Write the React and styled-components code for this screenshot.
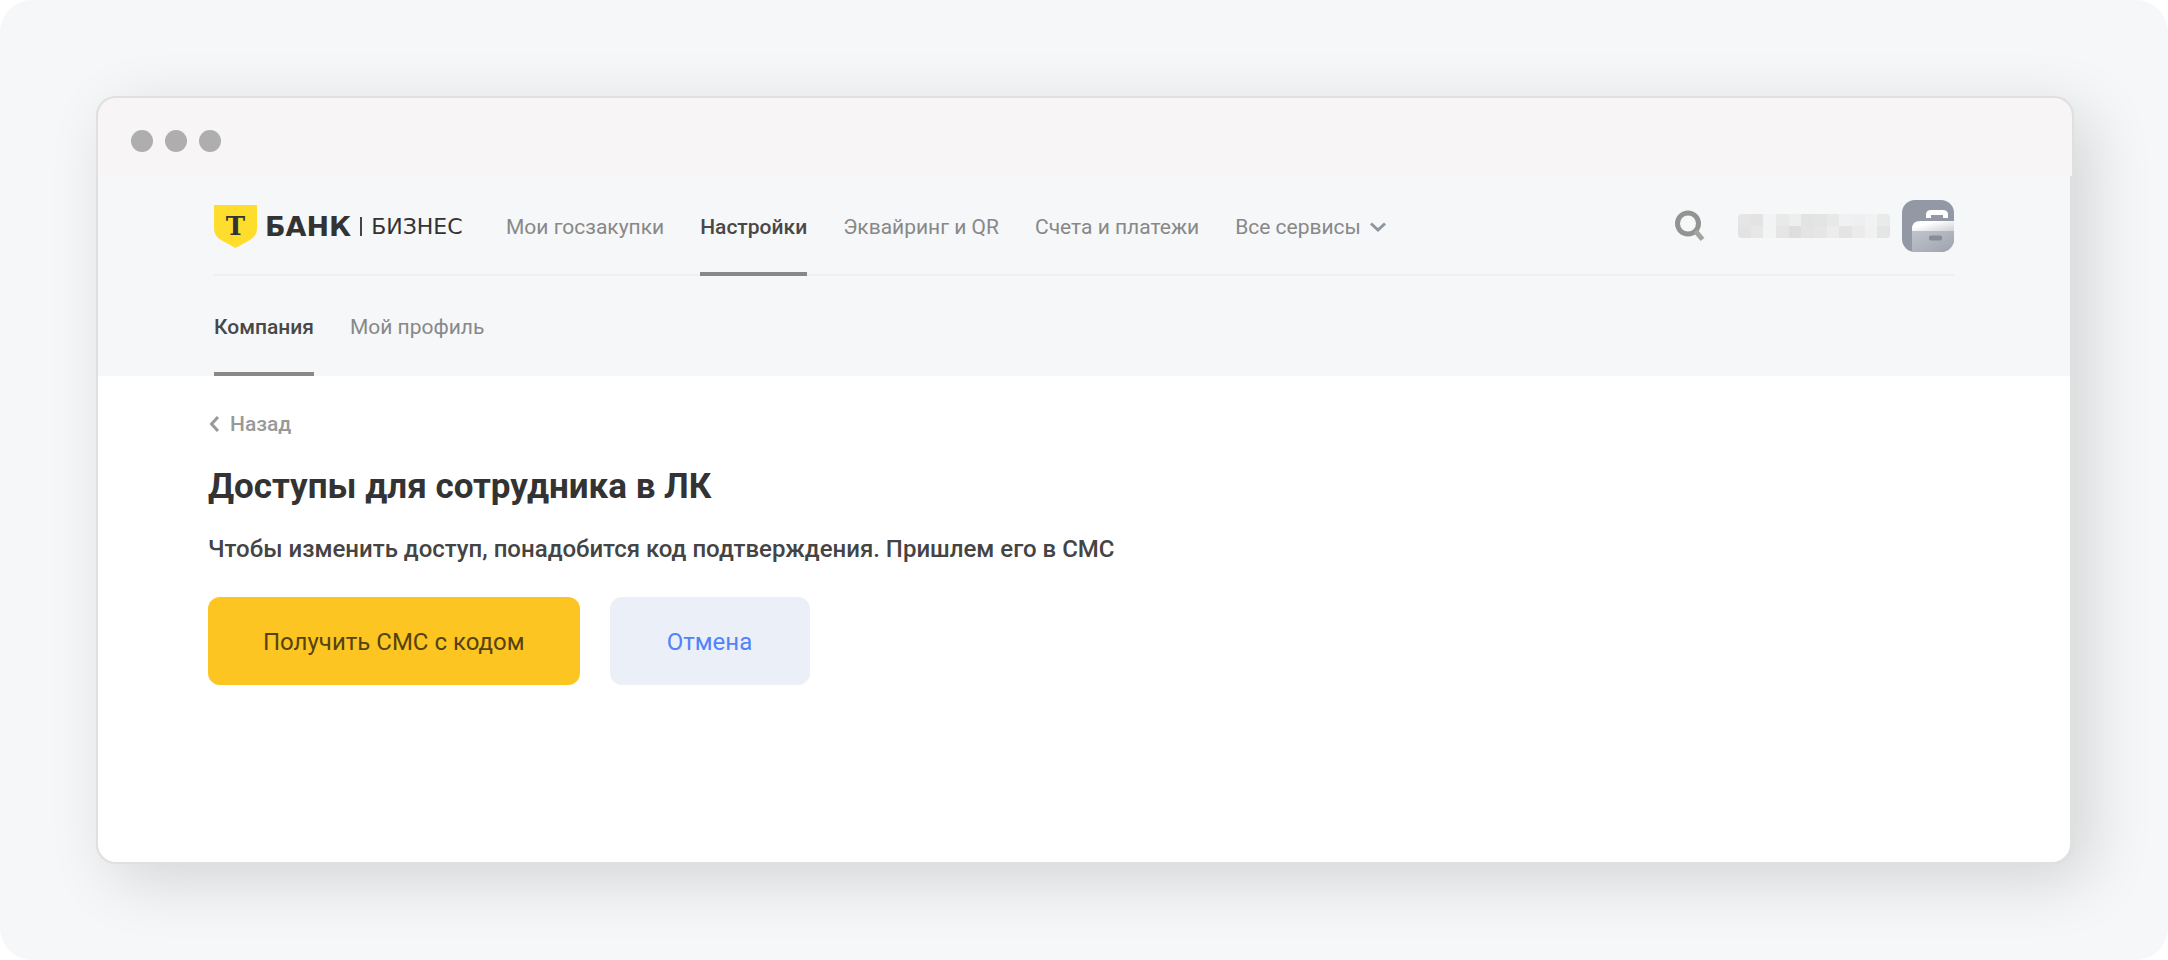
import React from "react";
import styled, { createGlobalStyle } from "styled-components";

const GlobalStyle = createGlobalStyle`
  * { box-sizing: border-box; }
  body {
    margin: 0;
    background: #fff;
    font-family: Roboto, "Liberation Sans", sans-serif;
    color: #333;
  }
`;

const Stage = styled.div`
  display: flex;
  min-height: 100vh;
  padding: 96px 94px 96px 96px;
  border-radius: 32px;
  background: #f5f7f9;
`;

const Window = styled.div`
  flex: 1;
  display: flex;
  flex-direction: column;
  border-radius: 20px;
  background: #dfe0e0;
  box-shadow: 16px 16px 64px rgba(0, 0, 0, 0.14);
`;

const TitleBar = styled.div`
  display: flex;
  align-items: center;
  gap: 12px;
  height: 80px;
  padding: 8px 33px 0;
  border: 2px solid #e0e0e0;
  border-bottom: 0;
  border-radius: 20px 20px 0 0;
  background: #f7f5f6;
`;

const Dot = styled.span`
  width: 22px;
  height: 22px;
  border-radius: 50%;
  background: #aeaeae;
`;

const Body = styled.div`
  flex: 1;
  margin-right: 2px;
  border: 2px solid #e0e0e0;
  border-top: 0;
  border-radius: 0 0 20px 20px;
  background: #fff;
`;

const Header = styled.header`
  padding: 0 116px;
  background: #f5f7f9;
`;

const MainRow = styled.div`
  display: flex;
  align-items: stretch;
  height: 100px;
  background: linear-gradient(#eeeff1, #eeeff1) 0 98px / 100% 2px no-repeat;
`;

const Logo = styled.a`
  display: flex;
  align-items: center;
  width: 254px;
  margin-right: 38px;
  color: #333;
  font-family: "DejaVu Sans", sans-serif;
  text-decoration: none;
`;

const BankName = styled.span`
  margin-left: 8px;
  font-size: 27px;
  font-weight: 700;
`;

const Divider = styled.span`
  width: 2px;
  height: 19px;
  margin: 0 9px;
  background: #444;
`;

const Product = styled.span`
  font-size: 22px;
  font-weight: 400;
`;

const Tabs = styled.nav`
  display: flex;
  gap: 36px;
  height: 100px;
`;

const Tab = styled.a`
  display: flex;
  align-items: center;
  padding-top: 5px;
  border-bottom: 4px solid ${(p) => (p.$active ? "#888" : "transparent")};
  color: ${(p) => (p.$active ? "#484848" : "#888")};
  font-size: 21px;
  font-weight: ${(p) => (p.$active ? 500 : 400)};
  text-decoration: none;
  white-space: nowrap;
`;

const MenuButton = styled.button`
  display: flex;
  align-items: center;
  gap: 8px;
  padding: 1px 0 0;
  border: 0;
  background: none;
  color: #888;
  font: 21px Roboto, sans-serif;
  white-space: nowrap;
`;

const Account = styled.div`
  display: flex;
  align-items: center;
  margin-left: auto;
`;

const SearchButton = styled.button`
  display: flex;
  margin-right: 33px;
  padding: 0;
  border: 0;
  background: none;
`;

const Mosaic = styled.div`
  display: grid;
  grid-template-columns: repeat(12, 1fr);
  width: 152px;
  height: 24px;
  margin-right: 12px;
  border-radius: 4px;
  overflow: hidden;
`;

const Cell = styled.span`
  background: ${(p) => p.$shade};
`;

const Main = styled.main`
  padding: 36px 110px;
`;

const BackLink = styled.a`
  display: inline-flex;
  align-items: center;
  gap: 10px;
  color: #999;
  font-size: 21px;
  font-weight: 500;
  line-height: 24px;
  text-decoration: none;
`;

const Title = styled.h1`
  margin: 28px 0 0;
  font-size: 35px;
  font-weight: 700;
  line-height: 44px;
`;

const Lead = styled.p`
  margin: 24px 0 0;
  color: #444;
  font-size: 24px;
  font-weight: 500;
  line-height: 32px;
`;

const Actions = styled.div`
  display: flex;
  gap: 30px;
  margin-top: 32px;
`;

const ActionButton = styled.button`
  min-width: 200px;
  height: 88px;
  padding: 2px 55px 0;
  border: 0;
  border-radius: 12px;
  background: ${(p) => (p.$primary ? "#fcc521" : "#ebeff7")};
  color: ${(p) => (p.$primary ? "#54430f" : "#4f83fa")};
  font: 24px Roboto, sans-serif;
`;

const shades = [
  "#e5e5e6", "#e3e3e4", "#f2f3f4", "#e8e9e9", "#eeeeef", "#e2e3e3", "#e3e4e4", "#e8e8e9", "#f0f1f1", "#eeeff0", "#f1f2f2", "#e9eaea",
  "#e3e3e4", "#e7e7e8", "#f2f3f3", "#e5e5e5", "#dededf", "#e4e4e5", "#e6e6e7", "#ececed", "#e4e4e5", "#ebebec", "#f1f1f2", "#e4e5e5",
];

const Shield = () => (
  <svg width="43" height="43" viewBox="0 0 43 43" aria-hidden="true">
    <path d="M0 0H43V23Q43 31 36 35L21.5 43L7 35Q0 31 0 23Z" fill="#ffdd2d" />
    <text x="21.5" y="30" textAnchor="middle" fontFamily="DejaVu Serif" fontWeight="700" fontSize="26" fill="#333">Т</text>
  </svg>
);

const Chevron = () => (
  <svg width="18" height="12" viewBox="0 0 18 12" aria-hidden="true">
    <path d="M2 2.500L9 9L16 2.500" fill="none" stroke="#8e979f" strokeWidth="3" />
  </svg>
);

const BackArrow = () => (
  <svg width="12" height="18" viewBox="0 0 12 18" aria-hidden="true">
    <path d="M10 2L3.500 9L10 16" fill="none" stroke="#999" strokeWidth="3" />
  </svg>
);

const SearchIcon = () => (
  <svg width="30" height="32" viewBox="0 0 30 32" aria-hidden="true">
    <circle cx="13" cy="13.500" r="10.500" fill="none" stroke="#929491" strokeWidth="5" />
    <path d="M20.500 21L27.500 29.500" stroke="#a3a4a2" strokeWidth="5" />
  </svg>
);

const Briefcase = () => (
  <svg width="52" height="52" viewBox="0 0 52 52" role="img" aria-label="Компания">
    <defs>
      <linearGradient id="flap" x1="0" y1="0" x2="1" y2="1">
        <stop offset="0.300" stopColor="#fff" />
        <stop offset="1" stopColor="#c9ccd2" />
      </linearGradient>
      <linearGradient id="case" x1="0" y1="0" x2="1" y2="1">
        <stop offset="0" stopColor="#c0c4cc" />
        <stop offset="1" stopColor="#9da3ae" />
      </linearGradient>
      <clipPath id="tile"><rect width="52" height="52" rx="13" /></clipPath>
    </defs>
    <g clipPath="url(#tile)">
      <rect width="52" height="52" fill="#9299a4" />
      <path d="M26.500 18V14.500Q26.500 12.500 29 12.500H41Q43.500 12.500 43.500 14.500V18" fill="none" stroke="#fff" strokeWidth="5" />
      <path d="M10 32V29Q10 21 18 21H52V32Z" fill="url(#flap)" />
      <path d="M10 31H52V52H10Z" fill="url(#case)" />
      <rect x="27" y="35.500" width="13" height="5" rx="2" fill="#868c98" />
    </g>
  </svg>
);

export default function App() {
  return (
    <>
      <GlobalStyle />
      <Stage>
        <Window>
          <TitleBar>
            <Dot />
            <Dot />
            <Dot />
          </TitleBar>
          <Body>
            <Header>
              <MainRow>
                <Logo href="#">
                  <Shield />
                  <BankName>БАНК</BankName>
                  <Divider />
                  <Product>БИЗНЕС</Product>
                </Logo>
                <Tabs>
                  <Tab href="#">Мои госзакупки</Tab>
                  <Tab href="#" $active>Настройки</Tab>
                  <Tab href="#">Эквайринг и QR</Tab>
                  <Tab href="#">Счета и платежи</Tab>
                  <MenuButton type="button">
                    Все сервисы
                    <Chevron />
                  </MenuButton>
                </Tabs>
                <Account>
                  <SearchButton type="button" aria-label="Поиск">
                    <SearchIcon />
                  </SearchButton>
                  <Mosaic aria-hidden="true">
                    {shades.map((shade, i) => (
                      <Cell key={i} $shade={shade} />
                    ))}
                  </Mosaic>
                  <Briefcase />
                </Account>
              </MainRow>
              <Tabs>
                <Tab href="#" $active>Компания</Tab>
                <Tab href="#">Мой профиль</Tab>
              </Tabs>
            </Header>
            <Main>
              <BackLink href="#">
                <BackArrow />
                Назад
              </BackLink>
              <Title>Доступы для сотрудника в ЛК</Title>
              <Lead>Чтобы изменить доступ, понадобится код подтверждения. Пришлем его в СМС</Lead>
              <Actions>
                <ActionButton type="button" $primary>Получить СМС с кодом</ActionButton>
                <ActionButton type="button">Отмена</ActionButton>
              </Actions>
            </Main>
          </Body>
        </Window>
      </Stage>
    </>
  );
}
